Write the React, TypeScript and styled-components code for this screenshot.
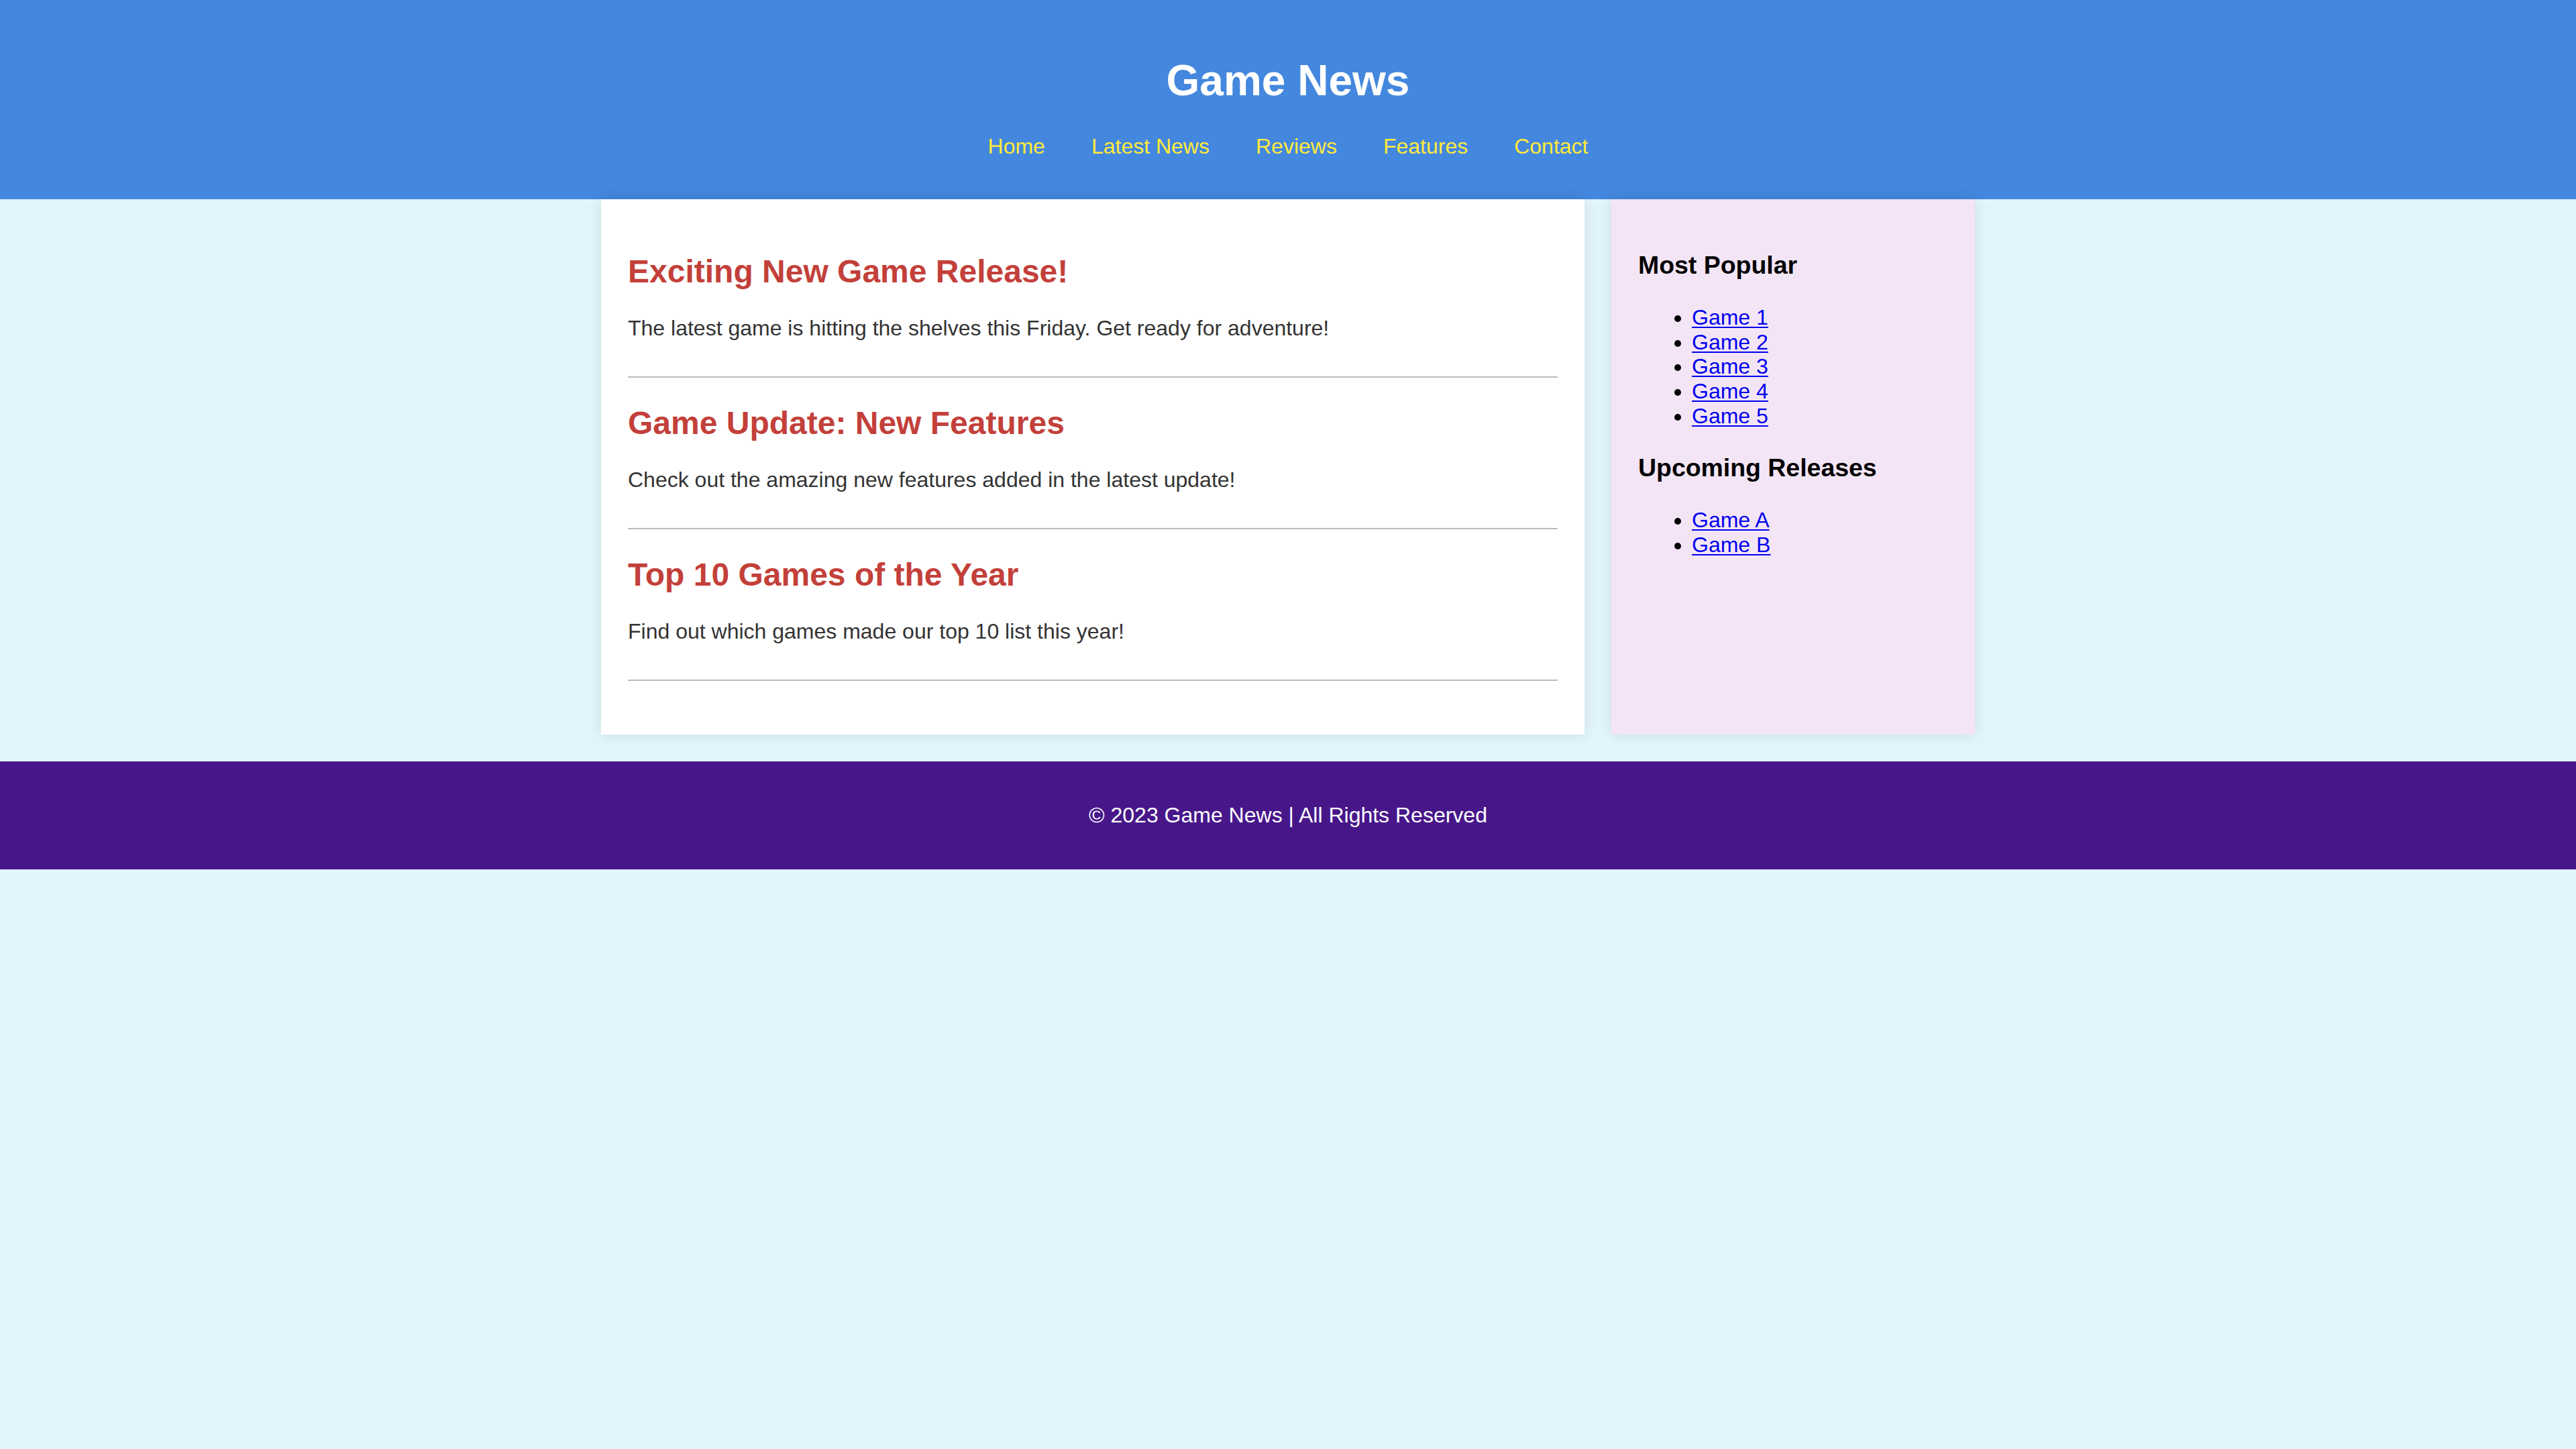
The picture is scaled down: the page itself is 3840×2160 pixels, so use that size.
import React from 'react'
import styled, { createGlobalStyle } from 'styled-components'

const GlobalStyle = createGlobalStyle`
  html, body {
    margin: 0;
    padding: 0;
  }
  body {
    background: #e1f5fa;
    font-family: "Liberation Sans", Arial, sans-serif;
    font-size: 32px;
  }
`

const Header = styled.header`
  background: #4487de;
  color: #fff;
  text-align: center;
  padding: 40px 0 60px;
`

const SiteTitle = styled.h1`
  font-size: 64px;
  font-weight: 700;
  margin: 43px 0;
`

const Nav = styled.nav`
  display: flex;
  justify-content: center;
  gap: 69px;
`

const NavLink = styled.a`
  color: #ffeb3b;
  text-decoration: none;
  font-size: 32px;
`

const Container = styled.div`
  display: flex;
  gap: 40px;
  max-width: 2048px;
  margin: 0 auto 40px;
  align-items: stretch;
`

const Main = styled.main`
  flex: 3 1 0;
  background: #fff;
  padding: 40px;
  box-shadow: 0 0 20px rgba(0, 0, 0, 0.1);
`

const Article = styled.article`
  border-bottom: 2px solid #bbb;
  padding-bottom: 20px;
  margin-bottom: 40px;
`

const ArticleTitle = styled.h2`
  color: #c3403a;
  font-size: 48px;
  margin: 40px 0 39px;
`

const ArticleText = styled.p`
  color: #333;
  font-size: 32px;
  margin: 0 0 33px;
`

const Sidebar = styled.aside`
  flex: 1 1 0;
  background: #f3e5f5;
  padding: 40px;
  box-shadow: 0 0 20px rgba(0, 0, 0, 0.1);
`

const SideTitle = styled.h3`
  font-size: 37.44px;
  margin: 37.44px 0;
  color: #000;
`

const GameList = styled.ul`
  margin: 32px 0;
  padding-left: 80px;
  line-height: 36.8px;
`

const GameLink = styled.a`
  color: #0000ee;
  text-decoration: underline;
  text-decoration-thickness: 2px;
  text-underline-offset: 3px;
`

const Footer = styled.footer`
  background: #47178a;
  color: #fff;
  text-align: center;
  padding: 62px 0;
  font-size: 32px;
  line-height: 36.8px;
`

const articles = [
  { title: 'Exciting New Game Release!', text: 'The latest game is hitting the shelves this Friday. Get ready for adventure!' },
  { title: 'Game Update: New Features', text: 'Check out the amazing new features added in the latest update!' },
  { title: 'Top 10 Games of the Year', text: 'Find out which games made our top 10 list this year!' },
]

const popular = ['Game 1', 'Game 2', 'Game 3', 'Game 4', 'Game 5']
const upcoming = ['Game A', 'Game B']

export default function App() {
  return (
    <>
      <GlobalStyle />
      <Header>
        <SiteTitle>Game News</SiteTitle>
        <Nav>
          {['Home', 'Latest News', 'Reviews', 'Features', 'Contact'].map((item) => (
            <NavLink key={item} href="#">
              {item}
            </NavLink>
          ))}
        </Nav>
      </Header>
      <Container>
        <Main>
          {articles.map((a) => (
            <Article key={a.title}>
              <ArticleTitle>{a.title}</ArticleTitle>
              <ArticleText>{a.text}</ArticleText>
            </Article>
          ))}
        </Main>
        <Sidebar>
          <SideTitle>Most Popular</SideTitle>
          <GameList>
            {popular.map((g) => (
              <li key={g}>
                <GameLink href="#">{g}</GameLink>
              </li>
            ))}
          </GameList>
          <SideTitle>Upcoming Releases</SideTitle>
          <GameList>
            {upcoming.map((g) => (
              <li key={g}>
                <GameLink href="#">{g}</GameLink>
              </li>
            ))}
          </GameList>
        </Sidebar>
      </Container>
      <Footer>© 2023 Game News | All Rights Reserved</Footer>
    </>
  )
}
